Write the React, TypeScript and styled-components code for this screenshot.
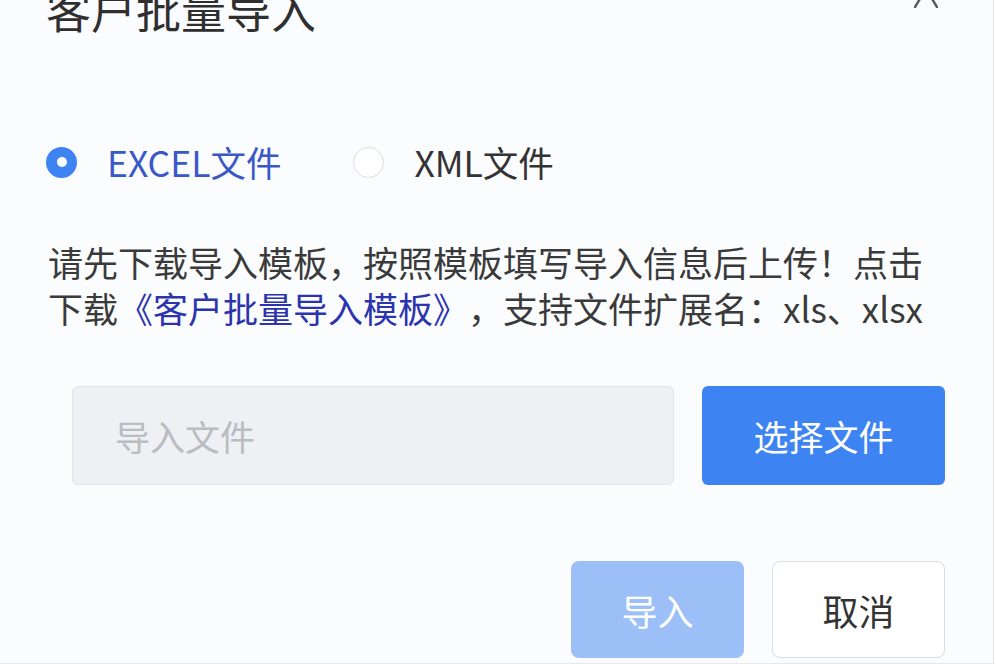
import React, { useState } from "react";
import styled, { createGlobalStyle } from "styled-components";

const GlobalStyle = createGlobalStyle`
  html, body {
    margin: 0;
    padding: 0;
    background: #ffffff;
  }
  body {
    font-family: "Noto Sans CJK SC", "Noto Sans", sans-serif;
    color: #333;
  }
`;

const Dialog = styled.div`
  box-sizing: border-box;
  width: 994px;
  height: 664px;
  padding: 0 48px 0 46px;
  background: #fbfcfe;
  border-right: 1px solid #e6e8ec;
  border-bottom: 1px solid #e6e8ec;
  overflow: hidden;
  display: flex;
  flex-direction: column;
`;

const Header = styled.div`
  display: flex;
  justify-content: space-between;
  align-items: flex-start;
  margin-top: -13px;
`;

const Title = styled.h2`
  margin: 0;
  font-size: 45px;
  line-height: 45px;
  font-weight: 400;
  color: #2f2f2f;
`;

const CloseButton = styled.button`
  border: none;
  background: none;
  padding: 0;
  margin: 5px 7px 0 0;
  width: 24px;
  height: 16px;
  cursor: pointer;
  display: flex;
`;

const RadioGroup = styled.div`
  display: flex;
  align-items: center;
  margin-top: 110px;
  height: 40px;
`;

const RadioItem = styled.label`
  display: flex;
  align-items: center;
  gap: 30px;
  margin-right: 72px;
  cursor: pointer;
`;

const Circle = styled.span<{ $checked: boolean }>`
  box-sizing: border-box;
  width: 31px;
  height: 31px;
  border-radius: 50%;
  display: flex;
  align-items: center;
  justify-content: center;
  background: ${(p) => (p.$checked ? "#3d84f2" : "#ffffff")};
  border: ${(p) => (p.$checked ? "none" : "1.5px solid #dcdee3")};

  &::after {
    content: "";
    display: ${(p) => (p.$checked ? "block" : "none")};
    width: 10px;
    height: 10px;
    border-radius: 50%;
    background: #ffffff;
  }
`;

const RadioLabel = styled.span<{ $checked: boolean }>`
  font-size: 35.5px;
  line-height: 40px;
  color: ${(p) => (p.$checked ? "#3a58c6" : "#333333")};
`;

const Hint = styled.p`
  margin: 57px 0 0 2px;
  font-size: 35px;
  line-height: 46px;
  color: #3a3a3a;
  white-space: nowrap;
  text-spacing-trim: space-all;
`;

const TemplateLink = styled.a`
  color: #2c34ad;
  text-decoration: none;
  cursor: pointer;
`;

const UploadRow = styled.div`
  display: flex;
  gap: 28px;
  margin: 55px 0 0 26px;
  height: 99px;
`;

const FileInput = styled.input`
  box-sizing: border-box;
  flex: 0 0 602px;
  height: 99px;
  padding: 0 0 0 42px;
  background: #eef0f4;
  border: 1px solid #e1e4e9;
  border-radius: 6px;
  font-family: inherit;
  font-size: 35px;
  color: #333;
  outline: none;

  &::placeholder {
    color: #b9bcc1;
  }
`;

const Button = styled.button<{ $variant: "primary" | "disabled" | "default" }>`
  box-sizing: border-box;
  height: 100%;
  border-radius: ${(p) => (p.$variant === "primary" ? "6px" : "8px")};
  font-family: inherit;
  font-size: ${(p) => (p.$variant === "primary" ? "35px" : "36px")};
  cursor: pointer;
  background: ${(p) =>
    p.$variant === "primary"
      ? "#3d84f2"
      : p.$variant === "disabled"
      ? "#9bbff6"
      : "#ffffff"};
  color: ${(p) => (p.$variant === "default" ? "#333333" : "#ffffff")};
  border: ${(p) =>
    p.$variant === "default" ? "1px solid #d9dce1" : "1px solid transparent"};
`;

const SelectButton = styled(Button)`
  flex: 0 0 243px;
`;

const Footer = styled.div`
  display: flex;
  justify-content: flex-end;
  gap: 28px;
  margin-top: 76px;
  height: 97px;
`;

const FooterButton = styled(Button)`
  width: 173px;
`;

const CloseIcon = () => (
  <svg width="24" height="16" viewBox="0 0 24 16">
    <path
      d="M1 15 L12 -3 M23 15 L12 -3"
      stroke="#555a60"
      strokeWidth="2.4"
      fill="none"
      strokeLinecap="round"
    />
  </svg>
);

const App = (): JSX.Element => {
  const [type, setType] = useState<"excel" | "xml">("excel");

  return (
    <>
      <GlobalStyle />
      <Dialog>
        <Header>
          <Title>客户批量导入</Title>
          <CloseButton aria-label="关闭">
            <CloseIcon />
          </CloseButton>
        </Header>

        <RadioGroup>
          <RadioItem onClick={() => setType("excel")}>
            <Circle $checked={type === "excel"} />
            <RadioLabel $checked={type === "excel"}>EXCEL文件</RadioLabel>
          </RadioItem>
          <RadioItem onClick={() => setType("xml")}>
            <Circle $checked={type === "xml"} />
            <RadioLabel $checked={type === "xml"}>XML文件</RadioLabel>
          </RadioItem>
        </RadioGroup>

        <Hint>
          请先下载导入模板，按照模板填写导入信息后上传！点击
          <br />
          下载<TemplateLink>《客户批量导入模板》</TemplateLink>，支持文件扩展名：xls、xlsx
        </Hint>

        <UploadRow>
          <FileInput placeholder="导入文件" readOnly />
          <SelectButton $variant="primary">选择文件</SelectButton>
        </UploadRow>

        <Footer>
          <FooterButton $variant="disabled">导入</FooterButton>
          <FooterButton $variant="default">取消</FooterButton>
        </Footer>
      </Dialog>
    </>
  );
};

export default App;
